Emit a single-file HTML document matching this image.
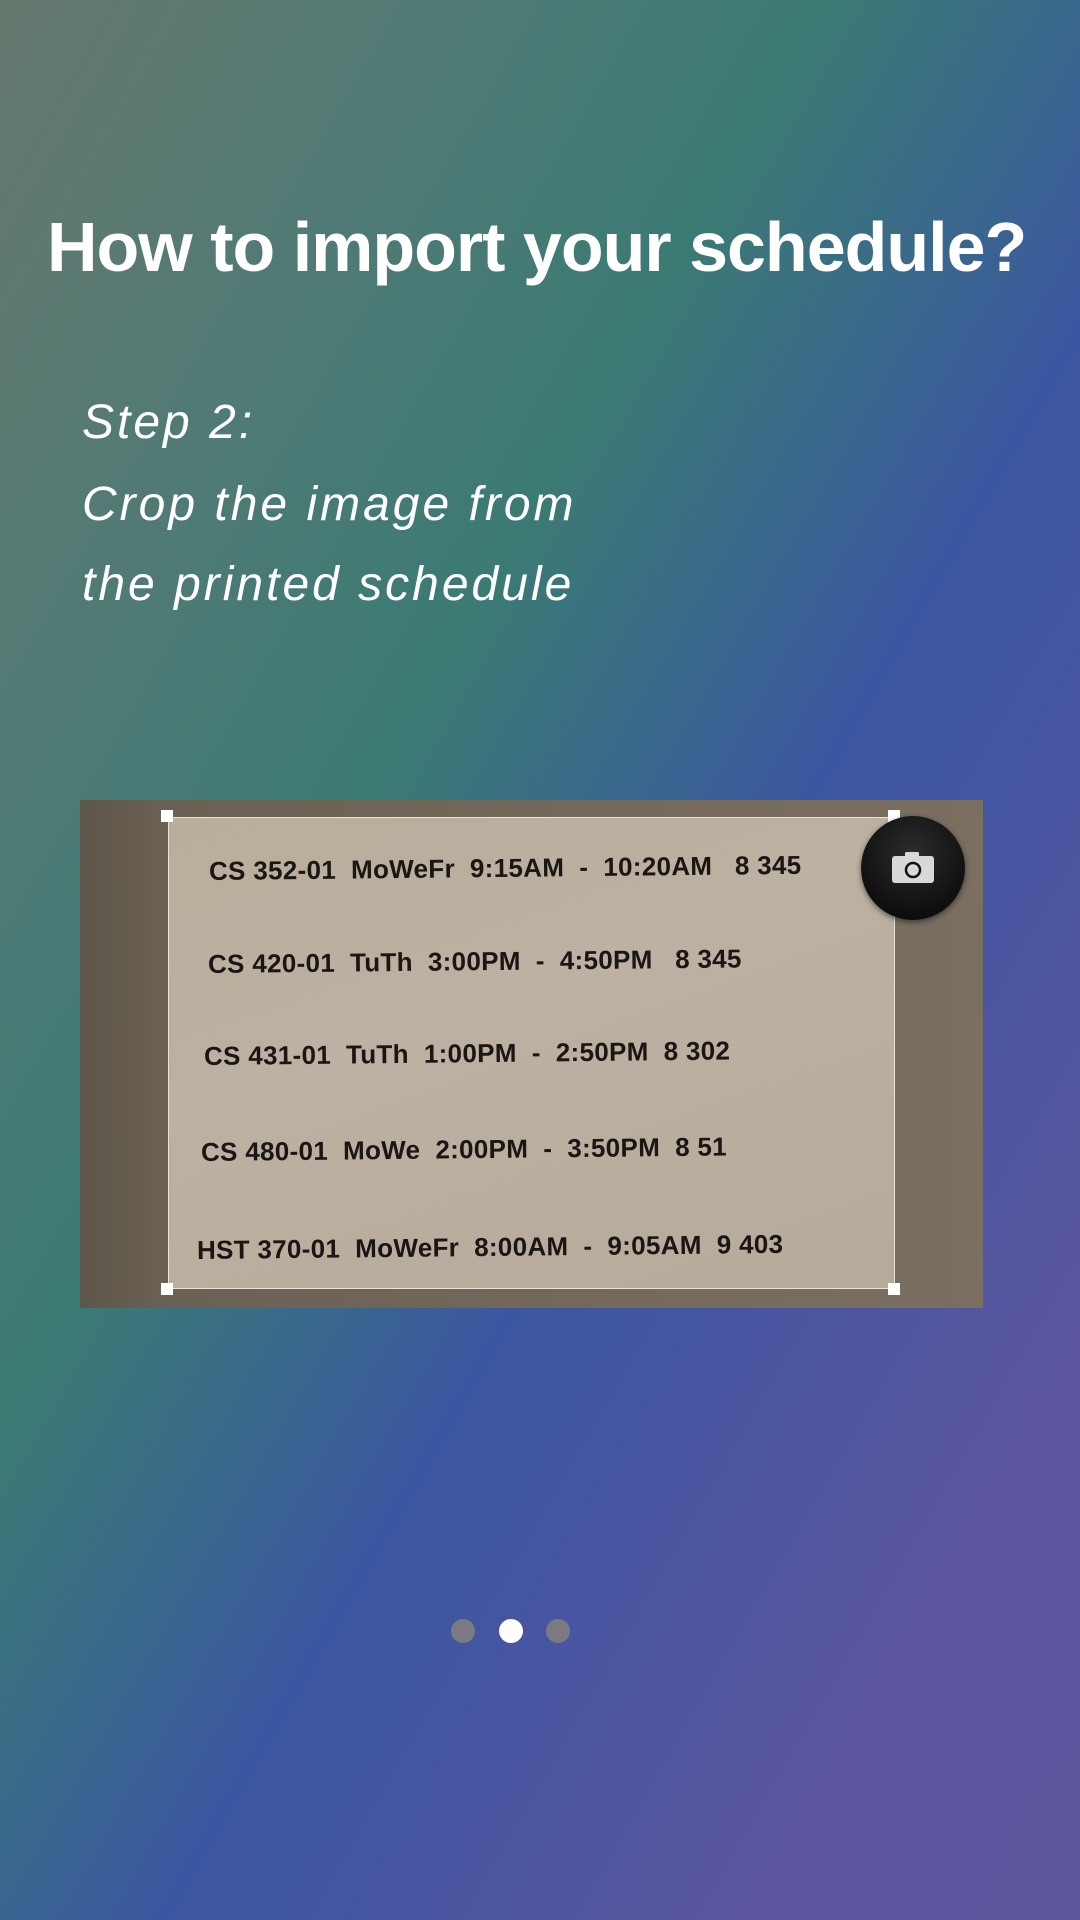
<!DOCTYPE html>
<html><head><meta charset="utf-8"><style>
*{margin:0;padding:0}
html,body{width:1080px;height:1920px;overflow:hidden}
body{position:relative;background:linear-gradient(120deg,#66796f 0%,#4f7a75 22%,#3b7a74 38%,#3a6a8a 48%,#3b56a0 58%,#4b55a0 72%,#5e56a0 86%,#5e569c 100%);font-family:"Liberation Sans",sans-serif}
.title{position:absolute;left:47px;top:207px;color:#fff;font-size:70px;font-weight:bold;white-space:nowrap;letter-spacing:-1px}
.step{position:absolute;left:82px;color:#fff;font-size:48px;font-style:italic;letter-spacing:3px;white-space:nowrap}
.photo{position:absolute;left:80px;top:800px;width:903px;height:508px;background:linear-gradient(90deg,#5f564b 0%,#6b6154 10%,#74695b 60%,#7a6f61 100%)}
.paper{position:absolute;left:168px;top:817px;width:727px;height:472px;background:linear-gradient(160deg,#b9ad9b 0%,#bcb1a2 40%,#b6aa9a 100%);border:1px solid #e8e4dc;box-sizing:border-box}
.h{position:absolute;width:12px;height:12px;background:#fff}
.row{position:absolute;font-weight:bold;font-size:26px;color:#1a1613;white-space:nowrap;transform:rotate(-0.6deg);transform-origin:0 50%;letter-spacing:0.3px}
.cam{position:absolute;left:861px;top:816px;width:104px;height:104px;border-radius:50%;background:radial-gradient(circle at 50% 35%,#2c2c2c,#0d0d0d 75%);box-shadow:0 2px 6px rgba(0,0,0,.5)}
.dot{position:absolute;top:1619px;width:24px;height:24px;border-radius:50%;background:#7a7a80}
</style></head><body>
<div class="title">How to import your schedule?</div>
<div class="step" style="top:395px">Step 2:</div>
<div class="step" style="top:477px">Crop the image from</div>
<div class="step" style="top:557px">the printed schedule</div>
<div class="photo"></div>
<div class="paper"></div>
<div class="h" style="left:161px;top:810px"></div>
<div class="h" style="left:888px;top:810px"></div>
<div class="h" style="left:161px;top:1283px"></div>
<div class="h" style="left:888px;top:1283px"></div>
<div class="row" style="left:209px;top:856px">CS 352-01&nbsp; MoWeFr&nbsp; 9:15AM&nbsp; -&nbsp; 10:20AM&nbsp;&nbsp; 8 345</div>
<div class="row" style="left:208px;top:949px">CS 420-01&nbsp; TuTh&nbsp; 3:00PM&nbsp; -&nbsp; 4:50PM&nbsp;&nbsp; 8 345</div>
<div class="row" style="left:204px;top:1041px">CS 431-01&nbsp; TuTh&nbsp; 1:00PM&nbsp; -&nbsp; 2:50PM&nbsp; 8 302</div>
<div class="row" style="left:201px;top:1137px">CS 480-01&nbsp; MoWe&nbsp; 2:00PM&nbsp; -&nbsp; 3:50PM&nbsp; 8 51</div>
<div class="row" style="left:197px;top:1235px">HST 370-01&nbsp; MoWeFr&nbsp; 8:00AM&nbsp; -&nbsp; 9:05AM&nbsp; 9 403</div>
<div class="cam"><svg width="104" height="104" viewBox="0 0 104 104"><rect x="31" y="40" width="42" height="27" rx="3" fill="#d8d8d8"/><rect x="44" y="36" width="14" height="5" rx="1.5" fill="#d8d8d8"/><circle cx="52" cy="54" r="7" fill="none" stroke="#111" stroke-width="2.5"/></svg></div>
<div class="dot" style="left:451px"></div>
<div class="dot" style="left:499px;background:#fff"></div>
<div class="dot" style="left:546px"></div>
</body></html>
